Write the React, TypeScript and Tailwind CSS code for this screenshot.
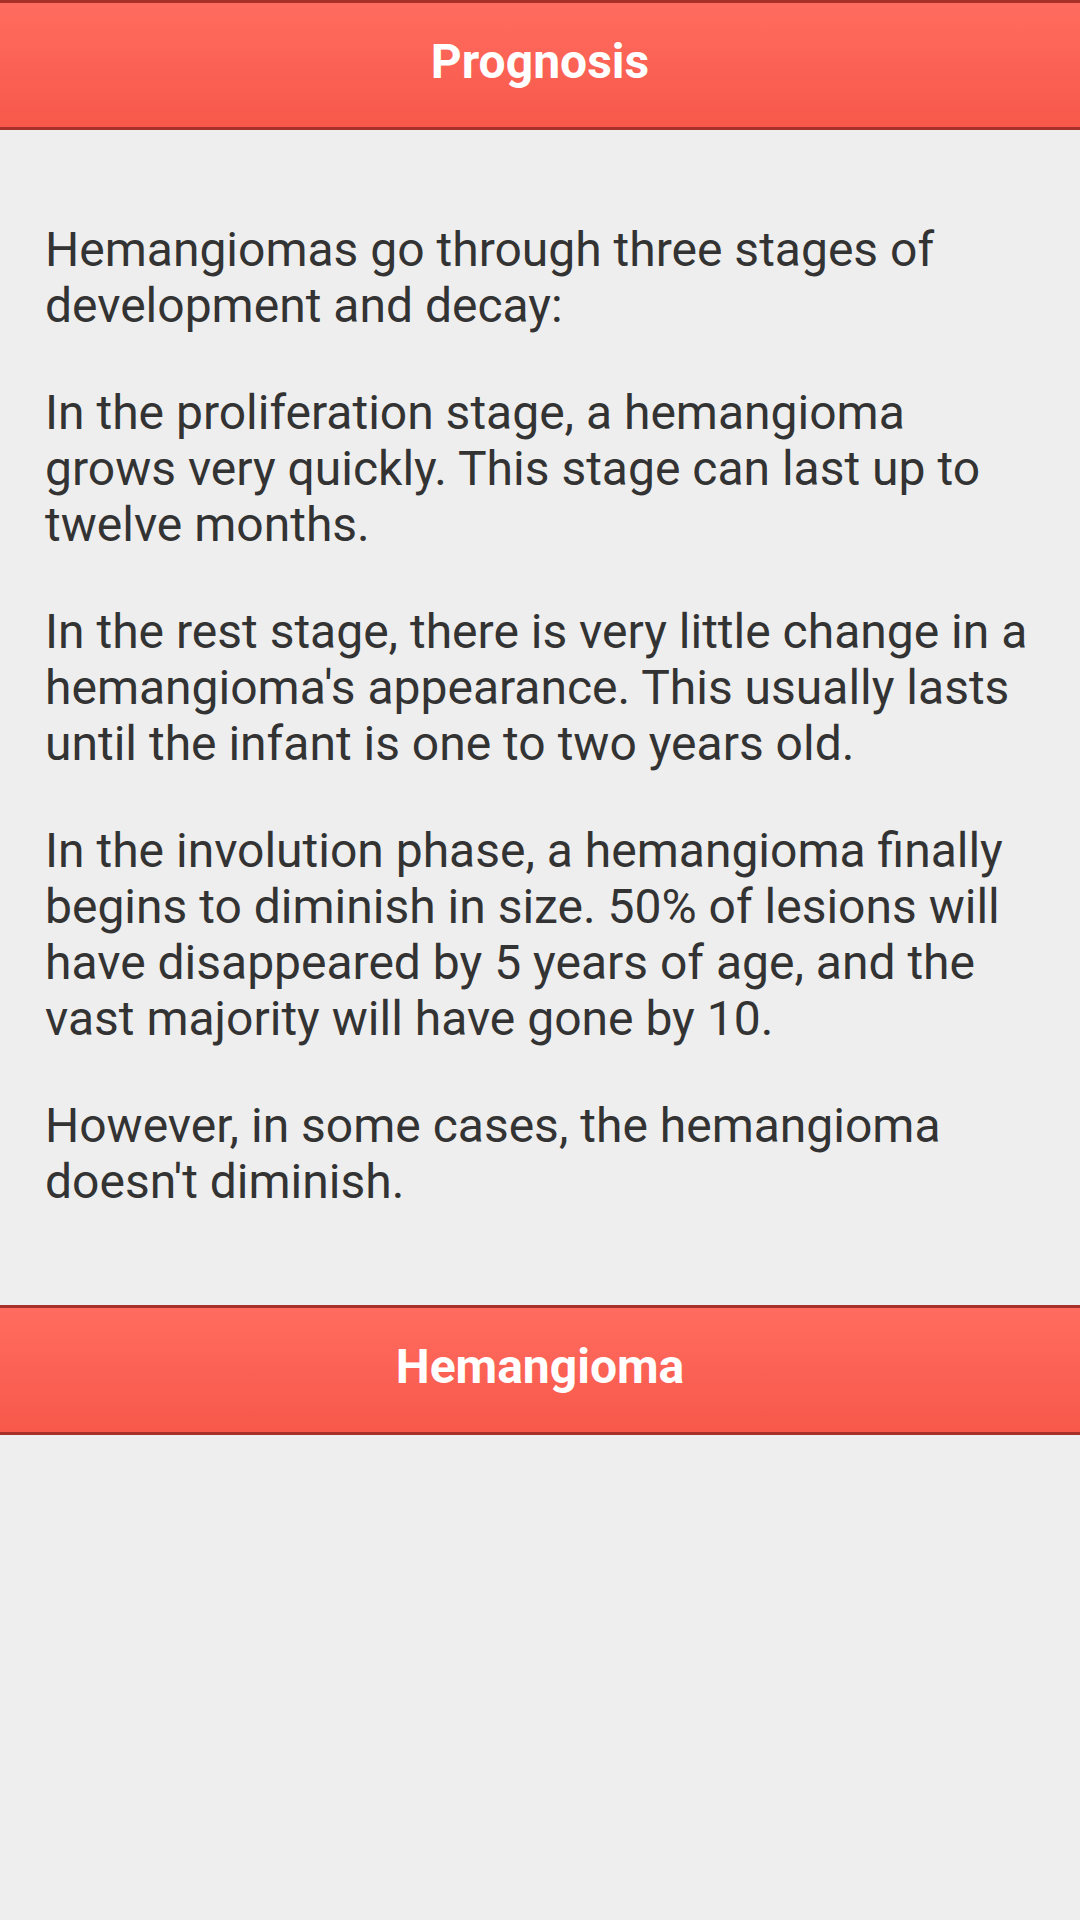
import React from "react";

function Bar({ title }: { title: string }) {
  return (
    <div className="h-[130px] w-full border-t-[3px] border-b-[3px] border-[#a8302a] bg-gradient-to-b from-[#ff6c5f] to-[#f7584a] flex items-center justify-center pb-[7px]">
      <span className="text-white font-bold text-[48px] leading-none" style={{ fontFamily: "Roboto, 'Liberation Sans', sans-serif" }}>
        {title}
      </span>
    </div>
  );
}

export default function App() {
  const paras = [
    "Hemangiomas go through three stages of development and decay:",
    "In the proliferation stage, a hemangioma grows very quickly. This stage can last up to twelve months.",
    "In the rest stage, there is very little change in a hemangioma's appearance. This usually lasts until the infant is one to two years old.",
    "In the involution phase, a hemangioma finally begins to diminish in size. 50% of lesions will have disappeared by 5 years of age, and the vast majority will have gone by 10.",
    "However, in some cases, the hemangioma doesn't diminish.",
  ];
  return (
    <div className="w-[1080px] h-[1920px] bg-[#eeeeee] flex flex-col" style={{ fontFamily: "Roboto, 'Liberation Sans', sans-serif" }}>
      <Bar title="Prognosis" />
      <div className="pt-[92px] pb-[95px] pl-[45px] pr-[40px] flex flex-col gap-[51px]">
        {paras.map((p, i) => (
          <p key={i} className="text-[48px] leading-[56px] text-[#333333]">
            {p}
          </p>
        ))}
      </div>
      <Bar title="Hemangioma" />
    </div>
  );
}
